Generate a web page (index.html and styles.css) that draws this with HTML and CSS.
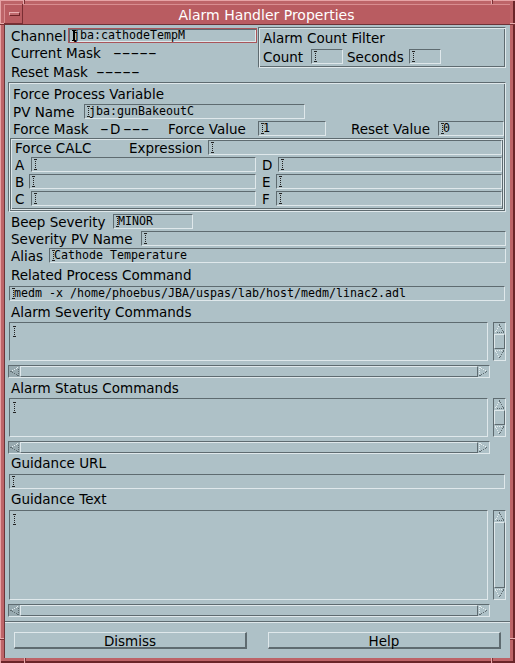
FILE: index.html
```html
<!DOCTYPE html>
<html>
<head>
<meta charset="utf-8">
<title>Alarm Handler Properties</title>
<link rel="stylesheet" href="styles.css">
</head>
<body>
<div class="window">
  <span class="notch nv n-t1"></span><span class="notch nv n-t2"></span>
  <span class="notch nh n-l1"></span><span class="notch nh n-r1"></span>
  <span class="notch nh n-l2"></span><span class="notch nh n-r2"></span>
  <span class="notch nv n-b1"></span><span class="notch nv n-b2"></span>
  <div class="titlebar">
    <div class="menubtn"><span class="menubar"></span></div>
    <div class="title">Alarm Handler Properties</div>
  </div>
  <div class="client">
    <div class="content">
      <div class="top">
        <div class="topleft">
          <div class="row">
            <span class="lbl w-channel">Channel</span>
            <span class="field focus w-chfield"><span class="cur solid"></span>jba:cathodeTempM</span>
          </div>
          <div class="line mt3"><span class="cm">Current Mask</span><span class="dashes">-----</span></div>
          <div class="line mt4"><span class="rm">Reset Mask</span><span class="dashes">-----</span></div>
        </div>
        <div class="frame countframe">
          <div class="line">Alarm Count Filter</div>
          <div class="row mt3">
            <span class="lbl w-count">Count</span><span class="field w-small"><span class="cur"></span></span>
            <span class="lbl w-seconds">Seconds</span><span class="field w-small"><span class="cur"></span></span>
          </div>
        </div>
      </div>

      <div class="frame forceframe">
        <div class="line mt3">Force Process Variable</div>
        <div class="row mt2">
          <span class="lbl w-pv">PV Name</span><span class="field w-pvfield"><span class="cur"></span>jba:gunBakeoutC</span>
        </div>
        <div class="row mt2">
          <span class="lbl w-fmask"><span class="fm">Force Mask</span><span class="dashes d1">-</span>D<span class="dashes d3">---</span></span>
          <span class="lbl w-fvalue">Force Value</span><span class="field w-fvfield"><span class="cur"></span>1</span>
          <span class="lbl w-rvalue">Reset Value</span><span class="field grow"><span class="cur"></span>0</span>
        </div>
        <div class="frame calcframe mt2">
          <div class="row">
            <span class="lbl w-fcalc">Force CALC</span><span class="lbl w-expr">Expression</span><span class="field grow"><span class="cur"></span></span>
          </div>
          <div class="row mt2">
            <div class="cell left"><span class="lbl w-a">A</span><span class="field grow"><span class="cur"></span></span></div>
            <div class="cell right"><span class="lbl w-d">D</span><span class="field grow"><span class="cur"></span></span></div>
          </div>
          <div class="row mt2">
            <div class="cell left"><span class="lbl w-b">B</span><span class="field grow"><span class="cur"></span></span></div>
            <div class="cell right"><span class="lbl w-e">E</span><span class="field grow"><span class="cur"></span></span></div>
          </div>
          <div class="row mt2">
            <div class="cell left"><span class="lbl w-c">C</span><span class="field grow"><span class="cur"></span></span></div>
            <div class="cell right"><span class="lbl w-e">F</span><span class="field grow"><span class="cur"></span></span></div>
          </div>
        </div>
      </div>

      <div class="row mt2">
        <span class="lbl w-beep">Beep Severity</span><span class="field w-beepfield"><span class="cur"></span>MINOR</span>
      </div>
      <div class="row mt2">
        <span class="lbl w-sevpv">Severity PV Name</span><span class="field grow"><span class="cur"></span></span>
      </div>
      <div class="row mt2">
        <span class="lbl w-alias">Alias</span><span class="field grow"><span class="cur"></span>Cathode Temperature</span>
      </div>

      <div class="line mt5">Related Process Command</div>
      <div class="row mt3">
        <span class="field full"><span class="cur"></span>medm -x /home/phoebus/JBA/uspas/lab/host/medm/linac2.adl</span>
      </div>

      <div class="line mt4">Alarm Severity Commands</div>
      <div class="scrolled h39 mt2">
        <div class="textarea"><span class="cur"></span></div>
        <div class="vscroll">
          <div class="varrow"><svg width="11" height="11" viewBox="0 0 11 11"><path d="M5.5 1.5 L1.5 9.5" class="al"/><path d="M5.5 1.5 L9.5 9.5 H1.5" class="ad"/></svg></div>
          <div class="vslider"></div>
          <div class="varrow"><svg width="11" height="11" viewBox="0 0 11 11"><path d="M9.5 1.5 H1.5 L5.5 9.5" class="al"/><path d="M9.5 1.5 L5.5 9.5" class="ad"/></svg></div>
        </div>
      </div>
      <div class="hscroll mt4">
        <div class="harrow left"><svg width="11" height="11" viewBox="0 0 11 11"><path d="M9.5 1.5 L1.5 5.5" class="al"/><path d="M1.5 5.5 L9.5 9.5 V1.5" class="ad"/></svg></div>
        <div class="hslider"></div>
        <div class="harrow"><svg width="11" height="11" viewBox="0 0 11 11"><path d="M1.5 9.5 V1.5 L9.5 5.5" class="al"/><path d="M9.5 5.5 L1.5 9.5" class="ad"/></svg></div>
      </div>

      <div class="line mt3">Alarm Status Commands</div>
      <div class="scrolled h39 mt2">
        <div class="textarea"><span class="cur"></span></div>
        <div class="vscroll">
          <div class="varrow"><svg width="11" height="11" viewBox="0 0 11 11"><path d="M5.5 1.5 L1.5 9.5" class="al"/><path d="M5.5 1.5 L9.5 9.5 H1.5" class="ad"/></svg></div>
          <div class="vslider"></div>
          <div class="varrow"><svg width="11" height="11" viewBox="0 0 11 11"><path d="M9.5 1.5 H1.5 L5.5 9.5" class="al"/><path d="M9.5 1.5 L5.5 9.5" class="ad"/></svg></div>
        </div>
      </div>
      <div class="hscroll mt4">
        <div class="harrow left"><svg width="11" height="11" viewBox="0 0 11 11"><path d="M9.5 1.5 L1.5 5.5" class="al"/><path d="M1.5 5.5 L9.5 9.5 V1.5" class="ad"/></svg></div>
        <div class="hslider"></div>
        <div class="harrow"><svg width="11" height="11" viewBox="0 0 11 11"><path d="M1.5 9.5 V1.5 L9.5 5.5" class="al"/><path d="M9.5 5.5 L1.5 9.5" class="ad"/></svg></div>
      </div>

      <div class="line mt2">Guidance URL</div>
      <div class="row mt3">
        <span class="field full"><span class="cur"></span></span>
      </div>

      <div class="line mt3">Guidance Text</div>
      <div class="scrolled h90 mt3">
        <div class="textarea"><span class="cur"></span></div>
        <div class="vscroll">
          <div class="varrow"><svg width="11" height="11" viewBox="0 0 11 11"><path d="M5.5 1.5 L1.5 9.5" class="al"/><path d="M5.5 1.5 L9.5 9.5 H1.5" class="ad"/></svg></div>
          <div class="vslider"></div>
          <div class="varrow"><svg width="11" height="11" viewBox="0 0 11 11"><path d="M9.5 1.5 H1.5 L5.5 9.5" class="al"/><path d="M9.5 1.5 L5.5 9.5" class="ad"/></svg></div>
        </div>
      </div>
      <div class="hscroll mt4">
        <div class="harrow left"><svg width="11" height="11" viewBox="0 0 11 11"><path d="M9.5 1.5 L1.5 5.5" class="al"/><path d="M1.5 5.5 L9.5 9.5 V1.5" class="ad"/></svg></div>
        <div class="hslider"></div>
        <div class="harrow"><svg width="11" height="11" viewBox="0 0 11 11"><path d="M1.5 9.5 V1.5 L9.5 5.5" class="al"/><path d="M9.5 5.5 L1.5 9.5" class="ad"/></svg></div>
      </div>

      <div class="sep"></div>
      <div class="buttons">
        <div class="btn">Dismiss</div>
        <div class="btn">Help</div>
      </div>
    </div>
  </div>
</div>
</body>
</html>
```

FILE: styles.css
```css
* { box-sizing: border-box; }
html, body { margin: 0; padding: 0; }
body {
  font-family: "DejaVu Sans", "Liberation Sans", sans-serif;
  font-size: 13.5px;
  color: #000;
  background: #bd6468;
}

.window {
  position: relative;
  width: 515px;
  height: 663px;
  padding: 4px 5px 5px 4px;
  background: #bd6468;
  box-shadow: inset 1px 1px 0 #e6a3a5, inset -2px -2px 0 #6a2529;
  display: flex;
  flex-direction: column;
}

.notch { position: absolute; background: #e8abad; }
.notch.nv { width: 1px; box-shadow: 1px 0 0 #7a3034; }
.notch.nh { height: 1px; box-shadow: 0 1px 0 #7a3034; }
.n-t1 { left: 23px; top: 0; height: 4px; }
.n-t2 { left: 491px; top: 0; height: 4px; }
.n-l1 { left: 0; top: 23px; width: 4px; }
.n-r1 { right: 0; top: 23px; width: 5px; }
.n-l2 { left: 0; top: 638px; width: 4px; }
.n-r2 { right: 0; top: 638px; width: 5px; }
.n-b1 { left: 24px; bottom: 0; height: 5px; }
.n-b2 { left: 491px; bottom: 0; height: 5px; }

.titlebar {
  display: flex;
  height: 20px;
  background: #b95c61;
  box-shadow: inset 0 1px 0 #d98d90, inset 1px 0 0 #d98d90;
}
.menubtn {
  width: 19px;
  height: 20px;
  border-right: 1px solid #7a2e33;
  border-bottom: 1px solid #7a2e33;
  padding: 8px 0 0 5px;
}
.menubar {
  display: block;
  width: 11px;
  height: 4px;
  background: #c06a6e;
  border-top: 1px solid #eab0b2;
  border-left: 1px solid #eab0b2;
  border-bottom: 1px solid #6e2428;
  border-right: 1px solid #6e2428;
}
.title {
  flex: 1;
  height: 20px;
  color: #fff;
  font-size: 14px;
  line-height: 22px;
  text-align: center;
  white-space: nowrap;
}

.client {
  flex: 1;
  background: #aec1c7;
  border-left: 1px solid #6c3337;
  border-top: 1px solid #6c3337;
  display: flex;
  flex-direction: column;
}
.content {
  padding: 0 4px 0 3px;
  display: flex;
  flex-direction: column;
}

.mt2 { margin-top: 2px; }
.mt3 { margin-top: 3px; }
.mt4 { margin-top: 4px; }
.mt5 { margin-top: 5px; }

.line {
  line-height: 15px;
  height: 15px;
  padding-left: 3px;
  white-space: nowrap;
}
.row {
  display: flex;
  height: 15px;
  align-items: flex-start;
}
.lbl {
  flex: none;
  line-height: 17px;
  padding-left: 3px;
  white-space: nowrap;
}

.field {
  flex: none;
  display: block;
  height: 15px;
  border: 1px solid;
  border-color: #5e6b70 #dfe8eb #dfe8eb #5e6b70;
  padding-left: 4px;
  font-family: "DejaVu Sans Mono", "Liberation Mono", monospace;
  font-size: 11.63px;
  line-height: 13px;
  white-space: pre;
  overflow: hidden;
}
.field.focus {
  border-color: #a9555a;
  box-shadow: inset 1px 1px 0 #5e6b70, inset -1px -1px 0 #dfe8eb;
  padding-left: 5px;
}
.field.grow { flex: 1; min-width: 0; }
.field.full { flex: 1; margin: 0 1px; }

.cur {
  display: inline-block;
  vertical-align: top;
  width: 3px;
  height: 11px;
  margin: 1px -1px 0 -2px;
  background:
    linear-gradient(#222, #222) left top / 1px 1px no-repeat,
    linear-gradient(#222, #222) right top / 1px 1px no-repeat,
    linear-gradient(#222, #222) left bottom / 1px 1px no-repeat,
    linear-gradient(#222, #222) right bottom / 1px 1px no-repeat,
    repeating-linear-gradient(to bottom, #222 0 1px, transparent 1px 2px) center / 1px 100% no-repeat;
}
.cur.solid {
  width: 4px;
  margin: 1px -3px 0 -2px;
  background:
    linear-gradient(#000, #000) left top / 4px 1px no-repeat,
    linear-gradient(#000, #000) left bottom / 4px 1px no-repeat,
    linear-gradient(#000, #000) 1px 0 / 2px 100% no-repeat;
}

.dashes {
  display: inline-block;
  transform: scaleX(1.8);
  transform-origin: left center;
}
.cm { display: inline-block; width: 102px; }
.rm { display: inline-block; width: 85px; }
.fm { display: inline-block; width: 87px; }
.d1 { margin-right: 5px; }
.d3 { margin-left: 3px; }

/* frames */
.frame {
  border: 1px solid;
  border-color: #5e6b70 #dfe8eb #dfe8eb #5e6b70;
  box-shadow: inset 1px 1px 0 #dfe8eb, inset -1px -1px 0 #5e6b70;
}
.top { display: flex; height: 57px; }
.topleft { width: 250px; padding-top: 3px; }
.countframe { width: 248px; height: 41px; margin-top: 2px; padding: 3px 0 0 1px; }
.forceframe { height: 130px; padding: 1px 1px 0 1px; }
.calcframe { height: 72px; padding: 1px; }

.w-channel { width: 60px; }
.w-chfield { width: 189px; }
.w-count { width: 51px; }
.w-small { width: 32px; }
.w-seconds { width: 66px; padding-left: 4px; }
.w-pv { width: 74px; }
.w-pvfield { width: 221px; }
.w-fmask { width: 148px; }
.w-fvalue { width: 100px; padding-left: 10px; }
.w-fvfield { width: 68px; }
.w-rvalue { width: 112px; padding-left: 25px; }
.w-fcalc { width: 114px; }
.w-expr { width: 82px; }
.cell { display: flex; height: 15px; align-items: flex-start; }
.cell.left { width: 244px; flex: none; }
.cell.right { flex: 1; }
.w-a, .w-c { width: 19px; }
.w-b { width: 17px; }
.w-d { width: 22px; padding-left: 6px; }
.w-e { width: 20px; padding-left: 6px; }
.w-beep { width: 105px; }
.w-beepfield { width: 80px; }
.w-sevpv { width: 133px; }
.w-alias { width: 41px; }

/* scrolled text */
.scrolled { display: flex; }
.h39 { height: 39px; }
.h90 { height: 90px; }
.textarea {
  width: 480px;
  margin-left: 1px;
  height: 100%;
  border: 1px solid;
  border-color: #5e6b70 #dfe8eb #dfe8eb #5e6b70;
  padding: 2px 0 0 5px;
  line-height: 13px;
}
.vscroll {
  width: 13px;
  height: 100%;
  margin-left: 5px;
  display: flex;
  flex-direction: column;
  border: 1px solid;
  border-color: #5e6b70 #dfe8eb #dfe8eb #5e6b70;
}
.varrow { height: 11px; flex: none; }
.varrow svg, .harrow svg { display: block; }
.vslider {
  flex: 1;
  border: 1px solid;
  border-color: #dfe8eb #5e6b70 #5e6b70 #dfe8eb;
}
.hscroll {
  width: 482px;
  height: 13px;
  display: flex;
  border: 1px solid;
  border-color: #5e6b70 #dfe8eb #dfe8eb #5e6b70;
}
.harrow { width: 11px; flex: none; }
.harrow.left { background: #98aab0; }
.hslider {
  flex: 1;
  border: 1px solid;
  border-color: #dfe8eb #5e6b70 #5e6b70 #dfe8eb;
}
.al, .ad {
  fill: none;
  stroke-width: 1;
  stroke-dasharray: 1 1;
  shape-rendering: crispEdges;
}
.al { stroke: #e6eef0; }
.ad { stroke: #5e6b70; }

.sep {
  height: 2px;
  margin: 4px -4px 0 -3px;
  border-top: 1px solid #5e6b70;
  border-bottom: 1px solid #dfe8eb;
}
.buttons {
  display: flex;
  margin-top: 9px;
  padding-left: 6px;
  gap: 21px;
}
.btn {
  width: 233px;
  height: 17px;
  border-style: solid;
  border-width: 1px 2px 2px 1px;
  border-color: #dfe8eb #5e6b70 #5e6b70 #dfe8eb;
  text-align: center;
  line-height: 16px;
  white-space: nowrap;
}
```
